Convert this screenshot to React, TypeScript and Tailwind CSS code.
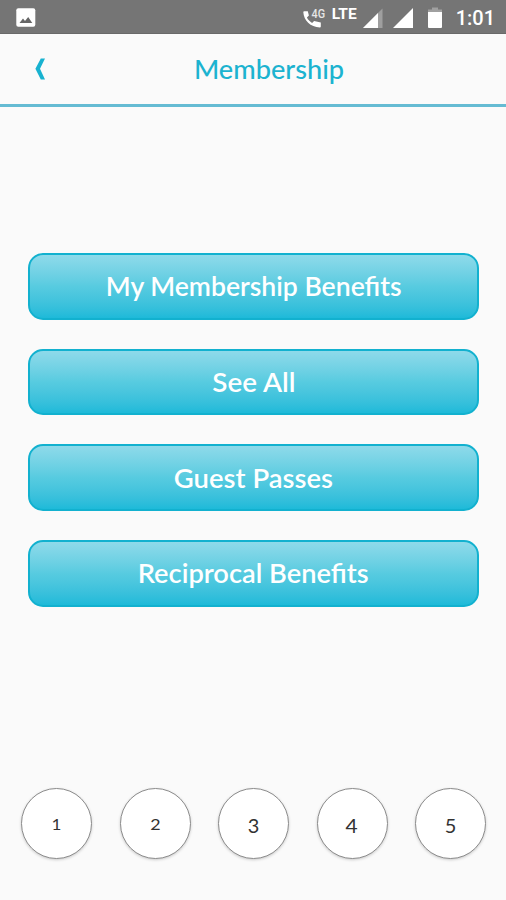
const benefits = [
  { label: "My Membership Benefits", text: "scale-x-[1.022]" },
  { label: "See All", text: "scale-x-[1.07]" },
  { label: "Guest Passes", text: "scale-x-[1.055]" },
  { label: "Reciprocal Benefits", text: "scale-x-[1.048]" },
];

const pages = [
  { n: 1, text: "text-[15.5px] scale-x-110 pt-[2px]" },
  { n: 2, text: "text-[15.5px] scale-x-[1.15] pt-[2px]" },
  { n: 3, text: "text-[19px] pt-[5px] scale-x-105" },
  { n: 4, text: "text-[19px] pt-[5px] scale-x-110" },
  { n: 5, text: "text-[19px] pt-[5px] scale-x-105" },
];

function StatusBar() {
  return (
    <div className="flex h-[34px] items-start border-b border-[#696969] bg-[#757575] pl-4 pr-[11px] text-white">
      <svg className="mt-2 h-[19px] w-5" viewBox="0 0 20 19">
        <rect x="0.3" y="0.2" width="19" height="18.6" rx="2" fill="#fff" />
        <path d="M3.5 15 7 10.6l2 2.3 3.2-4L16.3 15z" fill="#666" />
      </svg>
      <div className="ml-auto flex items-start">
        <svg className="mt-1 h-6 w-[24px]" viewBox="0 0 24 24">
          <path
            d="M1.2 7.2h3.6l1.1 4.4-2 2c1.2 2.4 2.9 4.1 5.2 5.3l2-1.9 6.7 1.4v4.1c0 .6-.4.9-.9.9C7.4 23.3.7 16.7.3 8.1c0-.5.4-.9.9-.9z"
            fill="#fff"
          />
          <text x="8.5" y="13.5" fontSize="12.5" fontWeight="500" fontFamily="Roboto, sans-serif" fill="#e6e6e6" textLength="13.5" lengthAdjust="spacingAndGlyphs">
            4G
          </text>
        </svg>
        <span className="ml-[5px] mt-[5px] font-['Roboto',sans-serif] text-[15.5px] font-bold leading-[18px]">
          LTE
        </span>
        <svg className="ml-[6px] mt-2 h-5 w-[20px]" viewBox="0 0 20 20">
          <path d="M0 20 19.5.5V20z" fill="#9f9f9f" />
          <path d="M0 20 15 5v15z" fill="#fff" />
        </svg>
        <svg className="ml-[10px] mt-2 h-5 w-[20px]" viewBox="0 0 20 20">
          <path d="M0 20 20 0v20z" fill="#fff" />
        </svg>
        <svg className="ml-[15px] mt-[7px] h-[21px] w-[14px]" viewBox="0 0 14 21">
          <path d="M0 2.5h4V.5h6v2h4V6H0z" fill="#a0a0a0" />
          <path d="M0 5h14v15a1 1 0 0 1-1 1H1a1 1 0 0 1-1-1z" fill="#fff" />
        </svg>
        <span className="ml-[14px] mt-[7px] font-['Roboto',sans-serif] text-[20px] font-medium leading-[22px]">1:01</span>
      </div>
    </div>
  );
}

export default function App() {
  return (
    <div className="flex h-[900px] w-[506px] flex-col overflow-hidden bg-[#fafafa] font-['Lato',sans-serif]">
      <StatusBar />

      <header className="grid h-[73px] grid-cols-[80px_1fr_48px] items-center border-b-[3px] border-[#65bbd3]">
        <button aria-label="Back" className="flex justify-center pl-px">
          <svg className="h-[22px] w-[11px]" viewBox="0 0 11 22">
            <path d="M5.8.5H10L5 10.8l5 10.7H5.8L.4 10.8z" fill="#18b2d0" />
          </svg>
        </button>
        <h1 className="scale-x-[1.045] text-center text-[26px] font-medium leading-none text-[#1cb3d0]">
          Membership
        </h1>
      </header>

      <main className="mt-[146px] flex flex-col gap-[29px] pl-[28px] pr-[27px]">
        {benefits.map((b) => (
          <button
            key={b.label}
            className="h-[66.7px] rounded-[15px] border-2 border-[#12b1cf] bg-linear-to-b from-[#8edaea] via-[#57cbe0] to-[#1dbad9] text-[26px] font-semibold leading-none text-white"
          >
            <span className={`inline-block ${b.text}`}>{b.label}</span>
          </button>
        ))}
      </main>

      <nav className="mb-[41px] mt-auto flex justify-between pl-[21px] pr-[20px]">
        {pages.map((p) => (
          <button
            key={p.n}
            className="flex size-[71px] items-center justify-center rounded-full border border-[#8c8c8c] bg-white text-[#333] shadow-[0_1px_3px_rgba(0,0,0,0.2)]"
          >
            <span className={p.text}>{p.n}</span>
          </button>
        ))}
      </nav>
    </div>
  );
}
